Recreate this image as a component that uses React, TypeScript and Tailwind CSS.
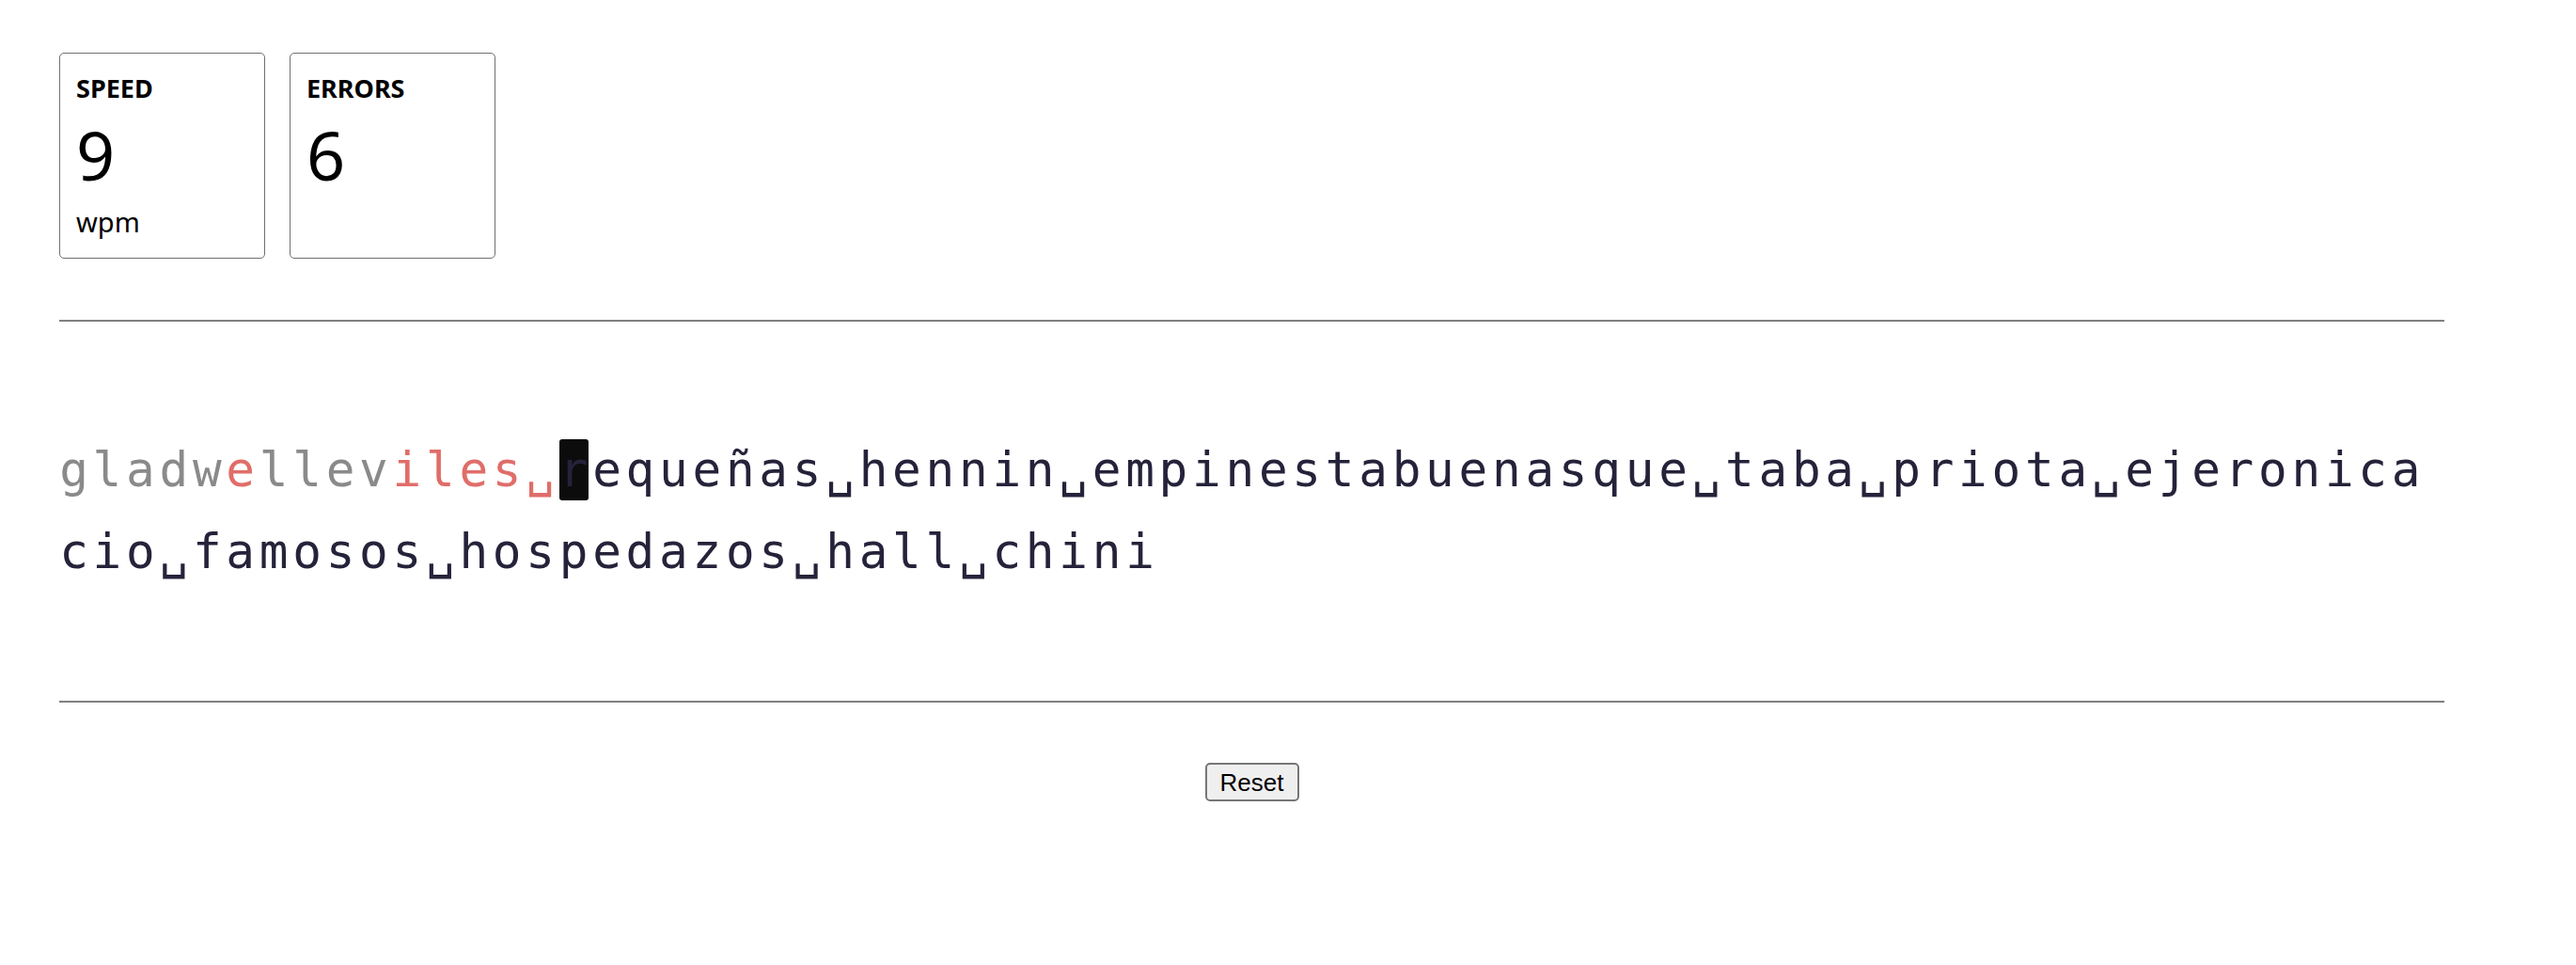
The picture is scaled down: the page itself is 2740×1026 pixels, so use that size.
import React from "react";

const TEXT =
  "gladwelleviles␣requeñas␣hennin␣empinestabuenasque␣taba␣priota␣ejeronicacio␣famosos␣hospedazos␣hall␣chini";
const CURSOR = 15;
const ERRORS = new Set([5, 10, 11, 12, 13, 14]);

function Stat({ label, value, unit }: { label: string; value: string; unit?: string }) {
  return (
    <div className="w-[219px] h-[219px] border border-[#707070] rounded-[5px] px-[17px] pt-[21px] flex flex-col text-black [font-family:'Noto_Sans','Open_Sans',sans-serif]">
      <div className="text-[27px] leading-[32px] font-bold">{label}</div>
      <div className="text-[72px] leading-[80px] mt-[14px]">{value}</div>
      {unit ? <div className="text-[29px] leading-[32px] mt-[16px]">{unit}</div> : null}
    </div>
  );
}

export default function App() {
  const chars = Array.from(TEXT);
  return (
    <div className="min-h-[1026px] bg-white pt-[56px] pl-[63px]">
      <div className="w-[2537px] flex flex-col">
        <div className="flex gap-[26px]">
          <Stat label="SPEED" value="9" unit="wpm" />
          <Stat label="ERRORS" value="6" />
        </div>
        <div className="h-[2px] bg-[#808080] mt-[65px]" />
        <div className="pt-[114px] pb-[115px] flex flex-wrap gap-x-[4.45px] [font-family:'DejaVu_Sans_Mono','Liberation_Mono',monospace]">
          {chars.map((c, i) => {
            let color = "text-[#25233a]";
            if (i < CURSOR) color = ERRORS.has(i) ? "text-[#e06d69]" : "text-[#8a8a8a]";
            const cursor = i === CURSOR;
            return (
              <span key={i} className="w-[31px] h-[87px] flex items-center justify-center">
                <span
                  className={`w-[31px] h-[65px] text-center text-[51px] leading-[66px] rounded-[3px] ${color} ${
                    cursor ? "bg-[#0c0c0c]" : ""
                  }`}
                >
                  {c}
                </span>
              </span>
            );
          })}
        </div>
        <div className="h-[2px] bg-[#808080]" />
        <div className="flex justify-center mt-[64px]">
          <button className="w-[100px] h-[41px] bg-[#efefef] border-2 border-[#767676] rounded-[5px] text-[26px] leading-[30px] text-black [font-family:'Liberation_Sans',Arial,sans-serif]">
            Reset
          </button>
        </div>
      </div>
    </div>
  );
}
